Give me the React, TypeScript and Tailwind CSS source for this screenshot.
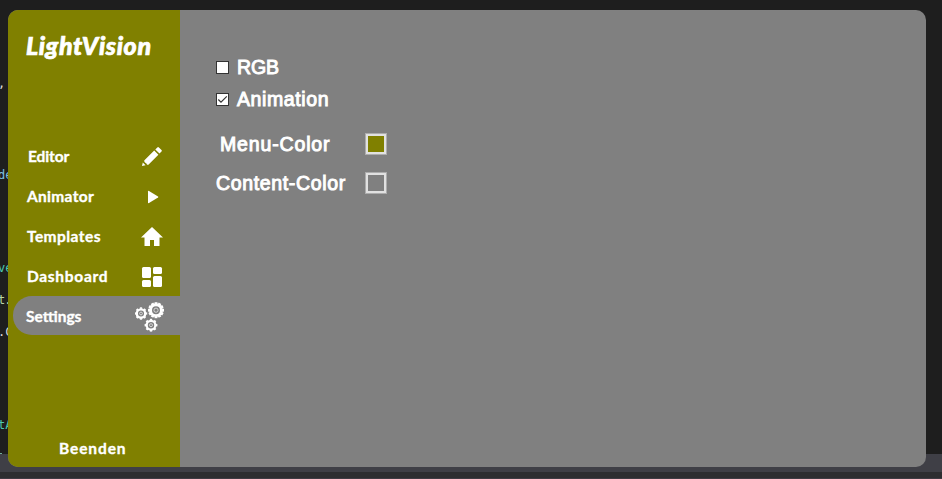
import React from "react";

const nav = [
  { label: "Editor", cls: "pl-[20px] tracking-[-0.1px]" },
  { label: "Animator", cls: "pl-[19px] tracking-[0.3px]" },
  { label: "Templates", cls: "pl-[19px] tracking-[0.45px]" },
  { label: "Dashboard", cls: "pl-[19px] tracking-[0.7px]" },
];

const Pencil = () => (
  <svg width="24" height="24" viewBox="0 0 24 24" fill="white">
    <path d="M2 21l.8-3.500 2.700 2.700zM4.200 15.500L14.200 5.500l4.200 4.200-10 10q-1.200.5-1.600-.5-.1-1.200-1.200-1.300-1.600-.5-1.400-2.400zM15.300 4.400l2-2q.8-.8 1.600 0l2.600 2.600q.8.8 0 1.600l-2 2z" />
  </svg>
);
const Play = () => (
  <svg width="24" height="24" viewBox="0 0 24 24" fill="white">
    <path d="M8 6.500q0-1 1-.5l9 5.400q.7.6 0 1.200L9 18q-1 .5-1-.5z" />
  </svg>
);
const Home = () => (
  <svg width="24" height="24" viewBox="0 0 24 24" fill="white">
    <path d="M10 21v-6h4v6h5.500v-8.500H23L12 2 1 12.500h3.500V21z" />
  </svg>
);
const Tiles = () => (
  <svg width="24" height="24" viewBox="0 0 24 24" fill="white">
    <rect x="2" y="2" width="9" height="11" rx="1.500" />
    <rect x="2" y="15" width="9" height="7" rx="1.500" />
    <rect x="13" y="2" width="9" height="7" rx="1.500" />
    <rect x="13" y="11" width="9" height="11" rx="1.500" />
  </svg>
);

function Gear({ x, y, r, n, w, hub }: { x: number; y: number; r: number; n: number; w: number; hub: number }) {
  return (
    <g transform={`translate(${x} ${y})`}>
      <circle r={r * 0.68} fill="none" stroke="white" strokeWidth={w} />
      {Array.from({ length: n }, (_, i) => (
        <rect key={i} x={-r * 0.18} y={-r} width={r * 0.36} height={r * 0.25} fill="white" transform={`rotate(${(i * 360) / n})`} />
      ))}
      <circle r={hub} fill="none" stroke="white" strokeOpacity="0.7" strokeWidth="0.900" />
    </g>
  );
}
const Gears = () => (
  <svg width="30" height="30" viewBox="0 0 30 30">
    <Gear x={6} y={11.500} r={6.200} n={8} w={2.300} hub={1.400} />
    <Gear x={21} y={8.200} r={8} n={12} w={2.900} hub={2.100} />
    <Gear x={16} y={23.200} r={6.400} n={8} w={2.300} hub={1.500} />
  </svg>
);
const icons = [Pencil, Play, Home, Tiles];

function Check({ checked }: { checked?: boolean }) {
  return (
    <span className="block w-[13px] h-[13px] border border-[#333333] bg-white">
      {checked && (
        <svg width="11" height="11" viewBox="0 0 11 11" fill="none" stroke="#333" strokeWidth="1.200" className="block">
          <path d="M1.300 5.500L4 8.200l5.800-5.800" />
        </svg>
      )}
    </span>
  );
}

const Swatch = ({ color }: { color: string }) => (
  <span className="block w-[22px] h-[22px] border border-[#adadad]">
    <span className={`block w-full h-full border-2 border-[#e1e1e1] ${color}`} />
  </span>
);

const code = [
  { t: ",", c: "left-[-2px] top-[75px] text-[#dcdcdc]" },
  { t: "de", c: "left-[-2px] top-[167px] text-[#7ebfe0]" },
  { t: "ve", c: "left-[-2px] top-[260px] text-[#4ec9b0]" },
  { t: "t.", c: "left-[-2px] top-[292px] text-[#b8d7a3] tracking-[-1px]" },
  { t: ".C", c: "left-[-2px] top-[324px] text-[#dcdcdc]" },
  { t: "tA", c: "left-[-2px] top-[417px] text-[#4ec9b0]" },
];

export default function App() {
  return (
    <div className="relative w-[942px] h-[479px] overflow-hidden bg-[#1e1e1e] font-['Liberation_Sans',sans-serif]">
      <div className="absolute inset-x-0 bottom-0 h-[25px] bg-[#3f3f46] border-b border-[#3f3b43]">
        <div className="mt-[18px] h-[6px] bg-[#2d2d30]" />
      </div>
      {code.map((l) => (
        <span key={l.t} className={`absolute leading-[16px] text-[12px] font-['DejaVu_Sans_Mono',monospace] ${l.c}`}>{l.t}</span>
      ))}
      <span className="absolute left-0 top-[453px] w-[2px] h-[1px] bg-[#6fae9c]" />
      <div className="relative mt-[10px] ml-[8px] flex w-[918px] h-[457px] rounded-[10px] overflow-hidden bg-[#808080]">
        <aside className="w-[172px] h-full flex flex-col bg-[#808000] text-white font-['Lato',sans-serif] font-bold text-[15.5px]">
          <div className="h-[126px] pl-[18px] pt-[21px]">
            <span className="block w-max leading-[28px] text-[25px] font-black italic tracking-[0.65px] [-webkit-text-stroke:0.7px_white]">LightVision</span>
          </div>
          {nav.map((n, i) => {
            const Icon = icons[i];
            return (
              <div key={n.label} className="h-[40px] flex items-center justify-between pr-[16px]">
                <span className={`${n.cls} pt-[2px] [-webkit-text-stroke:0.35px_white]`}>{n.label}</span>
                <span className="pt-px"><Icon /></span>
              </div>
            );
          })}
          <div className="ml-[5px] h-[39px] pl-[13px] pr-[15px] flex items-center justify-between rounded-l-[19px] bg-[#808080]">
            <span className="pt-[2px] tracking-[0px] [-webkit-text-stroke:0.35px_white]">Settings</span>
            <span className="pt-[3px]"><Gears /></span>
          </div>
          <div className="mt-auto h-[37px] pl-[51px] leading-[36px] tracking-[0.9px] [-webkit-text-stroke:0.35px_white]">Beenden</div>
        </aside>
        <main className="pl-[36px] pt-[41px] text-white text-[19.5px] leading-[24px] [-webkit-text-stroke:0.95px_white]">
          <div className="h-[32px] flex items-center gap-[8px]"><Check /><span className="tracking-[-0.1px]">RGB</span></div>
          <div className="h-[32px] flex items-center gap-[8px]"><Check checked /><span className="tracking-[0.6px]">Animation</span></div>
          <div className="mt-[9px] h-[40px] flex items-center">
            <span className="w-[149px] pl-[4px] tracking-[0.85px]">Menu-Color</span><Swatch color="bg-[#808000]" />
          </div>
          <div className="h-[38px] flex items-center">
            <span className="w-[149px] tracking-[0.65px]">Content-Color</span><Swatch color="bg-[#808080]" />
          </div>
        </main>
      </div>
    </div>
  );
}
